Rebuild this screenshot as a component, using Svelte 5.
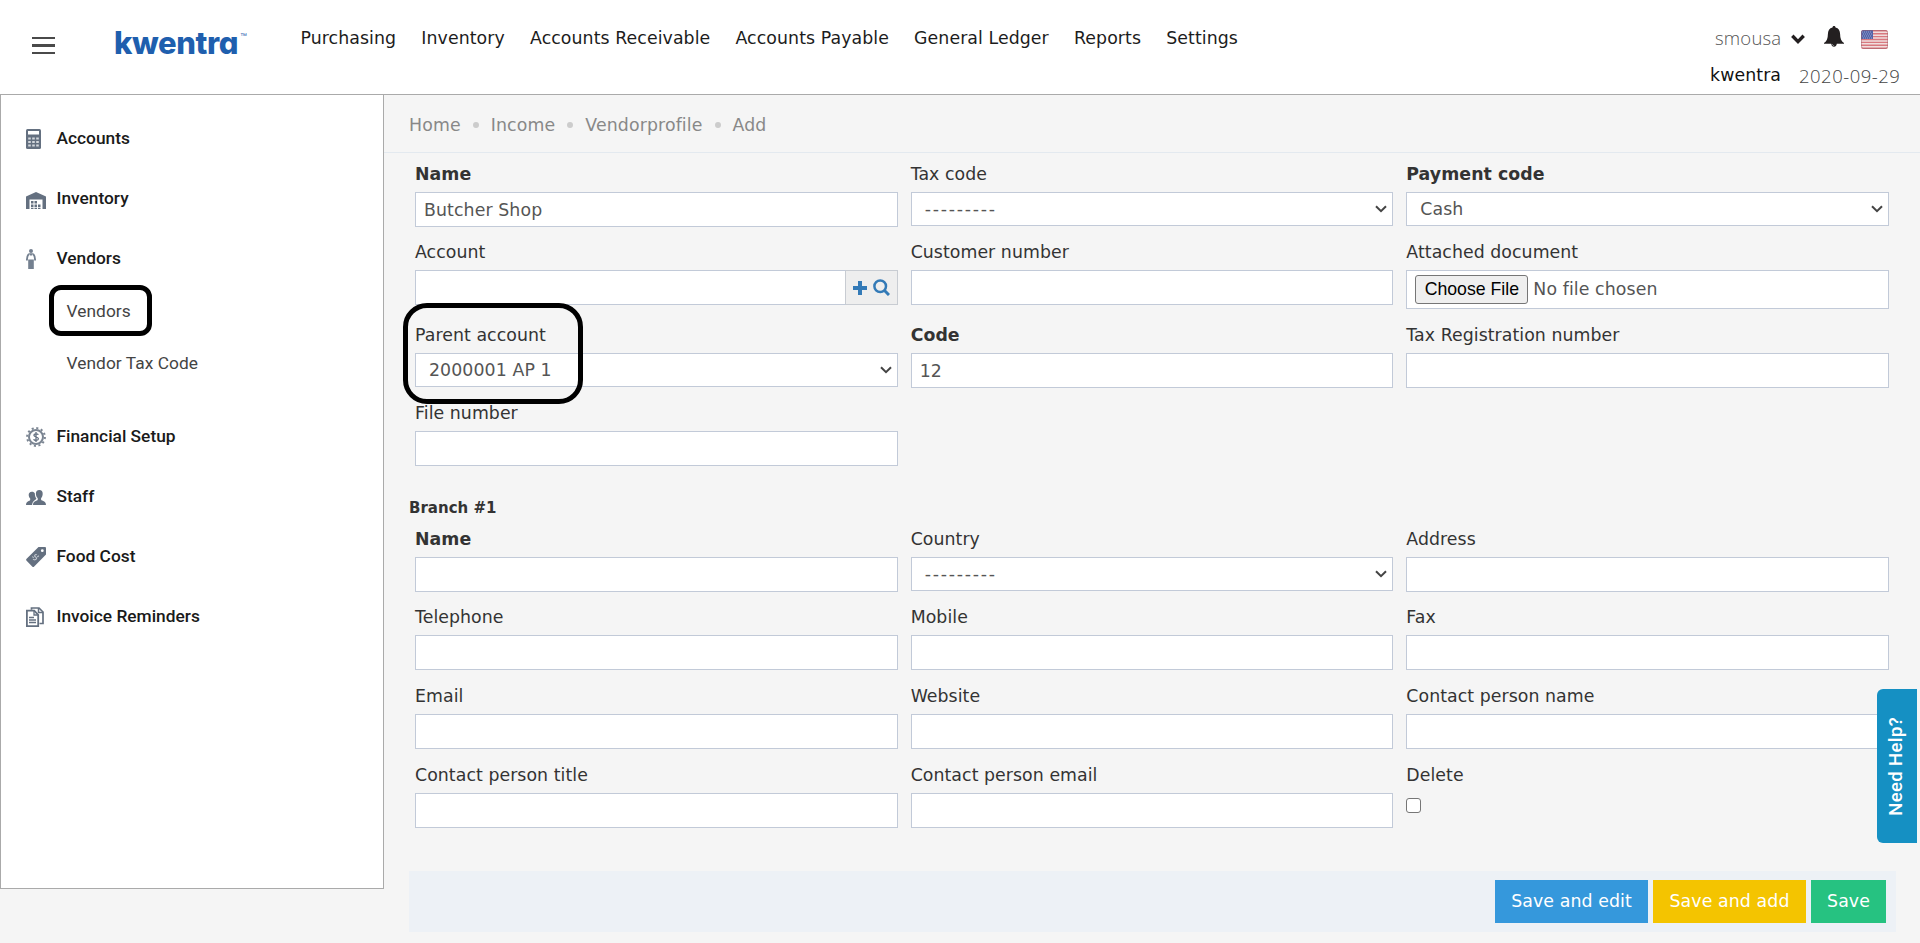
<script>
  const nav = ['Purchasing', 'Inventory', 'Accounts Receivable', 'Accounts Payable', 'General Ledger', 'Reports', 'Settings'];
  const crumbs = ['Home', 'Income', 'Vendorprofile', 'Add'];
  const menu = [
    { icon: 'calc', label: 'Accounts' },
    { icon: 'store', label: 'Inventory' },
    { icon: 'person', label: 'Vendors', sub: ['Vendors', 'Vendor Tax Code'] },
    { icon: 'gear', label: 'Financial Setup' },
    { icon: 'staff', label: 'Staff' },
    { icon: 'tag', label: 'Food Cost' },
    { icon: 'docs', label: 'Invoice Reminders' }
  ];
  const main = [
    { label: 'Name', req: true, value: 'Butcher Shop' },
    { label: 'Tax code', type: 'select', value: '---------' },
    { label: 'Payment code', req: true, type: 'select', value: 'Cash' },
    { label: 'Account', type: 'lookup' },
    { label: 'Customer number' },
    { label: 'Attached document', type: 'file' },
    { label: 'Parent account', type: 'select', value: '2000001 AP 1', marked: true },
    { label: 'Code', req: true, value: '12' },
    { label: 'Tax Registration number' },
    { label: 'File number' }
  ];
  const branch = [
    { label: 'Name', req: true },
    { label: 'Country', type: 'select', value: '---------' },
    { label: 'Address' },
    { label: 'Telephone' },
    { label: 'Mobile' },
    { label: 'Fax' },
    { label: 'Email' },
    { label: 'Website' },
    { label: 'Contact person name' },
    { label: 'Contact person title' },
    { label: 'Contact person email' },
    { label: 'Delete', type: 'check' }
  ];
</script>

{#snippet field(f)}
  <div class="field">
    <span class="label" class:req={f.req}>{f.label}</span>
    {#if f.type === 'select'}
      <div class="control select">
        <span class:dashes={f.value.startsWith('-')}>{f.value}</span>
        <svg width="12" height="8" viewBox="0 0 12 8"><path d="M1 1.2 6 6.2 11 1.2" fill="none" stroke="#444" stroke-width="2" /></svg>
      </div>
    {:else if f.type === 'lookup'}
      <div class="lookup">
        <div class="control"></div>
        <div class="addon">
          <svg width="14" height="14" viewBox="0 0 14 14"><path d="M5 0h4v5h5v4H9v5H5V9H0V5h5z" fill="#337ab7" /></svg>
          <svg width="17" height="17" viewBox="0 0 17 17"><circle cx="7.2" cy="7.2" r="5.8" fill="none" stroke="#337ab7" stroke-width="2.5" /><path d="m11.3 11.3 4.7 4.7" stroke="#337ab7" stroke-width="3" /></svg>
        </div>
      </div>
    {:else if f.type === 'file'}
      <div class="control file"><span class="choose">Choose File</span><span class="none">No file chosen</span></div>
    {:else if f.type === 'check'}
      <span class="check"></span>
    {:else}
      <div class="control">{f.value ?? ''}</div>
    {/if}
    {#if f.marked}<i class="mark"></i>{/if}
  </div>
{/snippet}

<div class="page">
  <header>
    <div class="burger"><i></i><i></i><i></i></div>
    <div class="logo"><b>kwentra</b><sup>™</sup></div>
    <nav>{#each nav as n}<a>{n}</a>{/each}</nav>
    <div class="user">
      <div class="line">
        <span class="light name">smousa</span>
        <svg class="chev" width="14" height="11" viewBox="0 0 14 11"><path d="M1.3 1.8 7 7.6l5.7-5.8" fill="none" stroke="#231f20" stroke-width="3.4" /></svg>
        <svg class="bell" width="20" height="21" viewBox="0 0 20 21"><path fill="#231f20" d="M10 0c1 0 1.5.7 1.5 1.6C14.700 2.300 16 5 16.100 8c.1 4.500 1 7 3.900 9v.8H12.800c-.2 1.900-1.300 3-2.800 3s-2.600-1.100-2.800-3H0V17c2.900-2 3.800-4.500 3.900-9C4 5 5.300 2.300 8.500 1.600 8.500.7 9 0 10 0z" /><path d="M8.200 18c.2 1.100.9 1.600 1.900 1.600" fill="none" stroke="#bbb" stroke-width=".7" /></svg>
        <svg class="flag" width="27" height="19" viewBox="0 0 27 19">
          <clipPath id="fl"><rect width="27" height="19" rx="2.500" /></clipPath>
          <g clip-path="url(#fl)">
            <rect width="27" height="19" fill="#f0dede" />
            <path d="M0 .8h27M0 3.700h27M0 6.600h27M0 9.500h27M0 12.400h27M0 15.300h27M0 18.200h27" stroke="#d8787f" stroke-width="1.400" />
            <rect width="12" height="9" fill="#5464a8" />
            <path d="M1 2h10M2 4h9M1 6h10M2 8h9" stroke="#a9b3da" stroke-width=".8" stroke-dasharray="1 1" />
          </g>
          <rect x=".5" y=".5" width="26" height="18" rx="2" fill="none" stroke="#a05a68" stroke-opacity=".45" />
        </svg>
      </div>
      <div class="line two"><span class="org">kwentra</span><span class="light date">2020-09-29</span></div>
    </div>
  </header>

  <div class="body">
    <aside>
      {#each menu as m}
        <div class="item">
          <span class="ico">
            {#if m.icon === 'calc'}
              <svg width="15" height="20" viewBox="0 0 15 20"><rect width="15" height="20" rx="1.500" fill="#647080" /><rect x="2" y="2" width="11" height="3.500" fill="#fff" /><path d="M2.200 9.500h2.600m1.400 0h2.600m1.400 0h2.600M2.200 13h2.600m1.400 0h2.600m1.400 0h2.600M2.200 16.500h2.600m1.400 0h2.600m1.400 0h2.600" stroke="#d3d7dc" stroke-width="2.200" /></svg>
            {:else if m.icon === 'store'}
              <svg class="low" width="20" height="17" viewBox="0 0 20 17"><path fill="#647080" d="M0 4.500 10 0l10 4.500V17h-3.500V7.500h-13V17H0z" /><path fill="#647080" d="M5 9h2.500v2.500H5zm3.500 0H11v2.500H8.500zM5 12.500h2.500V15H5zm3.500 0H11V15H8.500zm3.500 0h2.500V15H12zM5 15.800h2.500V17H5zm3.500 0H11V17H8.500zm3.500 0h2.500V17H12z" /></svg>
            {:else if m.icon === 'person'}
              <svg width="10" height="20" viewBox="0 0 10 20"><circle cx="5" cy="2" r="2" fill="#748090" /><path d="M3.500 5C1.800 5.400 1 7.500.9 11.500M6.500 5c1.700.4 2.500 2.500 2.600 6.500" fill="none" stroke="#748090" stroke-width="1.900" /><path fill="#748090" d="M3 4.200h4L5 7.200zM2.200 10.500h5.600V20H2.200z" /></svg>
            {:else if m.icon === 'gear'}
              <svg width="20" height="20" viewBox="0 0 20 20"><circle cx="10" cy="10" r="8.900" fill="none" stroke="#7b8592" stroke-width="2" stroke-dasharray="2.100 2.560" /><circle cx="10" cy="10" r="7" fill="none" stroke="#7b8592" stroke-width="2" /><path d="M12.300 7.700C11.800 6.500 7.900 6.300 7.900 8.300c0 2 4.500 1.400 4.500 3.500 0 2-4.100 2-4.800.4M10 5v10" fill="none" stroke="#647080" stroke-width="1.300" /></svg>
            {:else if m.icon === 'staff'}
              <svg width="20" height="15" viewBox="0 0 20 15"><path fill="#647080" d="M13.300 0c2.300 0 3.500 1.600 3.400 4-.1 2-.8 3.300-1.600 4.100v1.700c.6 1.200 4.900 1.100 4.900 5.200H7c0-4.100 4.300-4 4.700-5.200V8.100C10.800 7.300 10 6 9.900 4 9.800 1.600 11 0 13.300 0z" /><path fill="#647080" d="M5.800 1.800c1.400-.1 2.500.5 3 1.500.1 2.200.5 4 1.600 5.300-.3 1.600-3.600 1.500-4.300 6.400H0c0-4 3.700-3.800 4.200-5V8.500C2.400 6.900 1.600 2 5.800 1.800z" /></svg>
            {:else if m.icon === 'tag'}
              <svg width="20" height="20" viewBox="0 0 20 20"><path fill="#647080" d="M12.500 0H19q1 0 1 1v6.500L8.200 19.400q-1 1-2 0L.6 13.800q-1-1 0-2z" /><circle cx="16.300" cy="3.700" r="1.400" fill="#fff" /><path d="M10.800 7.800c-1.600-.8-2.800.8-1.800 1.700s2.300 1.600 1.200 2.700c-1 1-2.600.8-3-.4M6.200 9.600l1.600 1M11.300 10l1.500-1.200" fill="none" stroke="#c3c8cf" stroke-width="1.100" /></svg>
            {:else}
              <svg width="18" height="20" viewBox="0 0 18 20"><path d="M5.500 2.800V1H13l4 4v11.500h-3.500" fill="none" stroke="#647080" stroke-width="1.700" /><path d="M12.500 1v4.500H17" fill="none" stroke="#647080" stroke-width="1.500" /><path d="M.9 3.700h7.300l4 4.200v11.200H.9z" fill="#fff" stroke="#647080" stroke-width="1.800" /><path d="M8 3.700V8h4.200M3 10.500h5M3 13h7M3 15.500h7" fill="none" stroke="#647080" stroke-width="1.300" /></svg>
            {/if}
          </span>
          <span>{m.label}</span>
        </div>
        {#if m.sub}
          <div class="subs">
            {#each m.sub as s, i}<div class="sub"><span>{s}</span>{#if i === 0}<i class="ring"></i>{/if}</div>{/each}
          </div>
        {/if}
      {/each}
    </aside>

    <main>
      <div class="crumbs">{#each crumbs as c, i}{#if i}<i></i>{/if}<span>{c}</span>{/each}</div>
      <div class="grid first">{#each main as f}{@render field(f)}{/each}</div>
      <h4>Branch #1</h4>
      <div class="grid second">{#each branch as f}{@render field(f)}{/each}</div>
      <div class="actions">
        <button class="blue">Save and edit</button>
        <button class="gold">Save and add</button>
        <button class="green">Save</button>
      </div>
    </main>
  </div>
  <div class="help"><span>Need Help?</span></div>
</div>

<style>
  :global(body) { background: #f5f5f5; overflow: hidden; }
  * { box-sizing: border-box; }
  .page { position: relative; width: 1920px; height: 943px; overflow: hidden; background: #f5f5f5; font-family: 'DejaVu Sans', Verdana, sans-serif; font-size: 17.33px; color: #333; white-space: nowrap; }
  header { display: flex; height: 95px; background: #fff; border-bottom: 1px solid #aaa; }
  .burger { display: flex; flex-direction: column; justify-content: space-between; width: 23px; height: 17px; margin: 37px 0 0 32px; }
  .burger i { height: 2px; background: #4a4a4a; }
  .burger i:nth-child(2) { height: 3px; }
  .logo { display: flex; width: 133px; height: 40px; margin: 22px 0 0 59px; color: #1f5fae; }
  .logo b { width: 126px; font: 800 31px/42px 'Inter', sans-serif; font-feature-settings: 'cv11'; letter-spacing: -.4px; }
  .logo sup { font: 7px/28px 'Liberation Sans', sans-serif; }
  nav { display: flex; gap: 25.200px; margin: 27px 0 0 53.500px; line-height: 22px; letter-spacing: .08px; color: #1c1c1c; }
  .user { width: 210px; margin-left: auto; padding-top: 25px; }
  .line { display: flex; height: 38px; padding-left: 5px; line-height: 25px; }
  .two { padding-left: 0; }
  .light { font-family: 'Open Sans', sans-serif; font-weight: 300; font-size: 18.5px; color: #444; }
  .name { width: 76px; color: #555; letter-spacing: .2px; }
  .date { letter-spacing: .5px; }
  .org { width: 89px; color: #111; letter-spacing: .1px; }
  .chev { margin-top: 9px; }
  .bell { margin: 1px 0 0 19px; }
  .flag { margin: 5px 0 0 17px; }
  .body { display: flex; align-items: flex-start; }
  aside { width: 384px; height: 794px; padding-top: 13px; background: #fff; border: 1px solid #aaa; border-top: 0; }
  .item { display: flex; align-items: center; height: 60px; padding-left: 25px; font: 500 17.33px 'Roboto', sans-serif; color: #1a1a1a; }
  .ico { display: flex; align-items: center; width: 30.500px; height: 22px; padding-top: 2px; }
  .low { margin-top: 2px; }
  .subs { height: 118px; font-family: 'Roboto', sans-serif; color: #444; }
  .sub { position: relative; height: 52px; padding-left: 65.500px; line-height: 46px; letter-spacing: .05px; }
  .ring { position: absolute; left: 48px; top: -3px; width: 103px; height: 51px; border: 5px solid #000; border-radius: 12px; }
  main { flex: 1; min-width: 0; }
  .crumbs { display: flex; align-items: center; height: 58px; padding: 2px 0 0 25px; border-bottom: 1px solid #e3e9ef; color: #888; letter-spacing: .13px; }
  .crumbs i { width: 6px; height: 6px; margin: 0 12px 0 12px; border-radius: 50%; background: #ccc; }
  .grid { display: grid; grid-template-columns: repeat(3, 1fr); width: 1487px; margin-left: 24.500px; }
  .first { grid-template-rows: 78px 83px 78px 79px; padding-top: 5px; }
  .second { grid-template-rows: 78px 79px 79px 79px; }
  .field { position: relative; padding: 0 6.500px; }
  .label { display: block; height: 34px; line-height: 33px; letter-spacing: .06px; }
  .second .label { line-height: 32px; }
  .req { font-weight: 700; }
  .control { height: 35px; padding: 0 8px; border: 1px solid #c2cad8; background: #fff; color: #555; line-height: 34px; letter-spacing: .1px; }
  .select { display: flex; align-items: center; justify-content: space-between; height: 34px; padding: 0 5px 0 13px; }
  .dashes { letter-spacing: 1.750px; }
  .lookup { display: flex; }
  .lookup .control { flex: 1; border-right-color: #c8ccd2; }
  .addon { display: flex; align-items: center; gap: 6px; width: 52px; padding-left: 7px; border: 1px solid #c8ccd2; border-left: 0; background: #eee; }
  .file { display: flex; height: 39px; padding-top: 4px; line-height: 28px; }
  .choose { width: 113px; height: 29px; border: 1px solid #767676; border-radius: 3px; background: #efefef; color: #000; font-family: 'Liberation Sans', Arial, sans-serif; font-size: 17.7px; line-height: 26px; text-align: center; letter-spacing: 0; }
  .none { padding-left: 5px; }
  .check { display: block; width: 15px; height: 15px; margin-top: 5px; border: 1px solid #767676; border-radius: 3px; background: #fff; }
  .mark { position: absolute; z-index: 1; left: -6px; top: -16px; width: 180px; height: 101px; border: 5px solid #000; border-radius: 24px; }
  h4 { height: 47px; margin: 0 0 0 25px; padding-top: 20px; font-size: 15px; line-height: 24px; font-weight: 700; }
  .actions { display: flex; justify-content: flex-end; gap: 5px; width: 1487px; height: 61px; margin: 33px 0 0 25px; padding: 9px 10px 9px; background: #edf1f6; }
  button { height: 43px; padding: 0 0 2px; border: 0; color: #fff; font: 17.33px 'DejaVu Sans', sans-serif; letter-spacing: .1px; }
  .blue { width: 153px; background: #3598dc; }
  .gold { width: 153px; background: #f4c400; }
  .green { width: 75px; background: #26c281; }
  .help { position: absolute; right: 3px; top: 689px; display: flex; align-items: center; justify-content: center; width: 40px; height: 154px; border-radius: 6px 0 0 6px; background: #1590c3; color: #fff; }
  .help span { margin-right: 2px; font: 500 18.500px 'Roboto', sans-serif; letter-spacing: .35px; writing-mode: vertical-rl; transform: rotate(180deg); }
</style>
